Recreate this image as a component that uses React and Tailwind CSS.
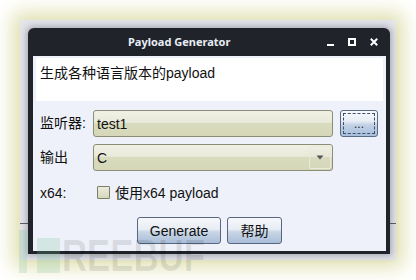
import React from "react";

const sans = { fontFamily: '"Liberation Sans", "Noto Sans CJK SC", Arial, sans-serif' };

function Field({ children, combo }) {
  return (
    <div className="relative flex h-[27px] w-[240px] items-center rounded-[3px] border border-[#8c8d76] bg-[linear-gradient(to_bottom,#f0f0e4_0%,#eaeadb_45%,#d9dbbf_50%,#d5d7b8_100%)] pl-[3px] text-[14px] text-[#111]">
      <span className="leading-none">{children}</span>
      {combo && (
        <div className="absolute right-[1px] top-[1px] bottom-[1px] flex w-[22px] items-center justify-center rounded-[2px] border border-[#e9e9dc] bg-[linear-gradient(to_bottom,#eeeee2_0%,#e6e6d6_50%,#d9dabf_50%,#d6d8ba_100%)]">
          <svg width="8" height="5" viewBox="0 0 8 5"><path d="M0.5 0.5 H7.5 L4 4.5 Z" fill="#555" /></svg>
        </div>
      )}
    </div>
  );
}

function Btn({ children, w }) {
  return (
    <div
      className={`flex h-[27px] ${w} items-center justify-center rounded-[3px] border border-[#56677f] bg-[linear-gradient(to_bottom,#f6f8fb_0%,#e8edf4_45%,#c9d6e6_55%,#a9bed8_100%)] text-[14px] text-[#111]`}
    >
      <span className="leading-none">{children}</span>
    </div>
  );
}

export default function App() {
  return (
    <div className="relative h-[280px] w-[416px] overflow-hidden bg-white" style={sans}>
      <div className="absolute left-[20px] top-[20px] h-[240px] w-[376px] bg-[#e4e5ea] shadow-[0_0_18px_7px_rgba(210,210,140,0.7)]">
        <div className="absolute left-0 right-0 top-[203px] h-[1px] bg-[#5a5c62]" />
        <div className="relative z-10 ml-[8px] mt-[8px] flex h-[226px] w-[362px] flex-col rounded-t-[6px] bg-[#20232a] shadow-[0_0_6px_2px_rgba(60,65,80,0.35)]">
          {/* title bar */}
          <div className="relative flex h-[28px] shrink-0 items-center">
            <span
              className="absolute left-[100px] top-[6px] text-[11px] font-bold text-[#e9edf5]"
              style={{ fontFamily: '"Noto Sans", "Open Sans", sans-serif' }}
            >
              Payload Generator
            </span>
            <div className="absolute left-[299px] top-[16px] h-[2px] w-[7px] bg-white" />
            <div className="absolute left-[320px] top-[10px] h-[8px] w-[8px] border-2 border-white" />
            <svg className="absolute left-[342px] top-[10px]" width="8" height="8" viewBox="0 0 8 8">
              <path d="M0.8 0.8 L7.2 7.2 M7.2 0.8 L0.8 7.2" stroke="white" strokeWidth="2" />
            </svg>
          </div>
          {/* client area */}
          <div className="mx-[5px] mb-[3px] flex flex-1 flex-col bg-[#eef1f9] pl-[7px] pt-[2px] mr-[4px]">
            <div className="-ml-[4px] mr-[3px] h-[43px] bg-white pl-[4px] pt-[5px] text-[14px] text-[#111]">
              <span style={{ fontFamily: '"Liberation Sans", "Noto Sans CJK SC", sans-serif' }}>生成各种语言版本的payload</span>
            </div>
            <div className="mt-[9px] flex items-center">
              <div className="w-[53px] text-[14px] text-[#111]">监听器:</div>
              <Field>test1</Field>
              <div className="ml-[7px] flex h-[27px] w-[38px] items-center justify-center rounded-[3px] border border-[#5a6b86] bg-[linear-gradient(to_bottom,#f7f9fc_0%,#e9eef5_40%,#c2d2e6_55%,#a8bedb_100%)] p-[2px]">
                <div className="flex h-full w-full items-end justify-center border border-dashed border-[#40506a] pb-[3px] text-[12px] leading-none text-[#222]">
                  ...
                </div>
              </div>
            </div>
            <div className="mt-[7px] flex items-center">
              <div className="w-[53px] text-[14px] text-[#111]">输出</div>
              <Field combo>C</Field>
            </div>
            <div className="mt-[14px] flex h-[15px] items-center">
              <div className="w-[53px] text-[14px] leading-none text-[#111]">x64:</div>
              <div className="ml-[4px] h-[13px] w-[13px] rounded-[1px] border border-[#7d7e68] bg-[linear-gradient(to_bottom,#ecebdc,#d6d8bb)]" />
              <span className="ml-[5px] text-[14px] leading-none text-[#111]">使用x64 payload</span>
            </div>
            <div className="mt-[17px] flex justify-center gap-[6px] pr-[7px]">
              <Btn w="w-[84px]">Generate</Btn>
              <Btn w="w-[55px]">帮助</Btn>
            </div>
          </div>
        </div>
      </div>
      {/* watermark */}
      <div className="pointer-events-none absolute left-[19px] top-[230px] z-20 h-[43px] w-[8px] bg-[rgba(120,190,150,0.22)]" />
      <div className="pointer-events-none absolute left-[37px] top-[238px] z-20 h-[35px] w-[23px] bg-[rgba(120,190,150,0.22)]" />
      <div
        className="pointer-events-none absolute left-[62px] top-[240px] z-20 origin-left scale-x-[0.79] text-[44px] font-bold leading-[32px] text-[rgba(0,0,0,0.09)]"
        style={{ fontFamily: '"Liberation Sans", Arial, sans-serif' }}
      >
        REEBUF
      </div>
    </div>
  );
}
